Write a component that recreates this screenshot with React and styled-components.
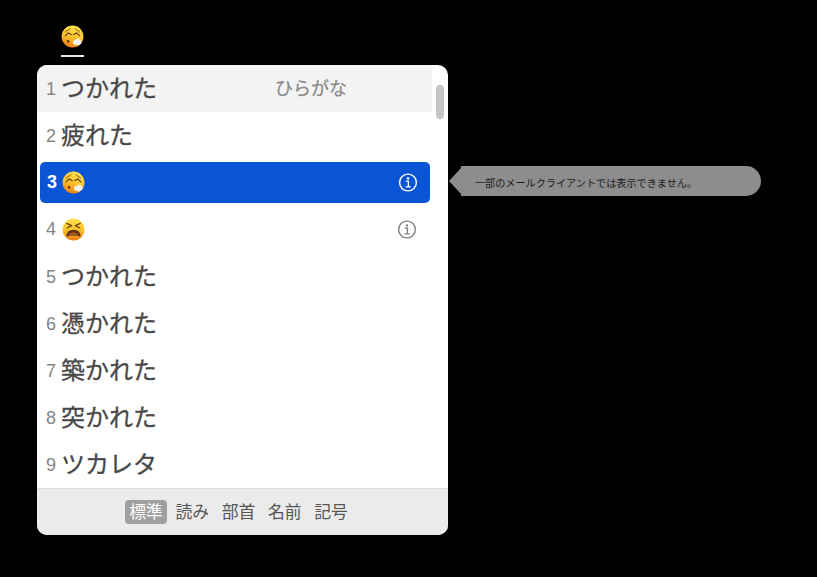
import React from "react";
import styled, { createGlobalStyle } from "styled-components";

const Global = createGlobalStyle`
  html, body { margin: 0; padding: 0; background: #000; }
  body { font-family: "Noto Sans CJK JP", "Liberation Sans", sans-serif; }
`;

const Page = styled.div`
  width: 817px;
  height: 577px;
  background: #000;
  overflow: hidden;
  padding: 25px 0 0 37px;
  box-sizing: border-box;
`;

const Composing = styled.div`
  width: 23px;
  height: 32px;
  margin-left: 24px;
  margin-bottom: 8px;
  box-sizing: border-box;
  border-bottom: 2px solid #e8e8e8;
  display: flex;
  justify-content: center;
`;

const Panel = styled.div`
  position: relative;
  width: 411px;
  height: 470px;
  background: #fff;
  border-radius: 10px;
  display: flex;
  flex-direction: column;
`;

const List = styled.div`
  flex: 1;
  width: 395px;
  display: flex;
  flex-direction: column;
`;

const Row = styled.div`
  position: relative;
  height: 47px;
  flex: none;
  display: flex;
  align-items: center;
  box-sizing: border-box;
  padding-left: 9px;
  background: ${(p) => (p.$active ? "#f3f3f3" : "transparent")};
  border-radius: ${(p) => (p.$active ? "10px 0 0 0" : "0")};
`;

const Selected = styled(Row)`
  height: 41px;
  margin: 3px 2px 3px 3px;
  padding-left: 7px;
  background: #0a55d6;
  border-radius: 5px;
`;

const Num = styled.span`
  width: ${(p) => (p.$on ? 15 : 16)}px;
  flex: none;
  padding-top: ${(p) => (p.$low ? 2 : 0)}px;
  font: ${(p) => (p.$on ? 700 : 400)} 18px "Liberation Sans", sans-serif;
  color: ${(p) => (p.$on ? "#fff" : "#858585")};
`;

const Word = styled.span`
  font-size: 24px;
  font-weight: 400;
  -webkit-text-stroke: 0.3px #484848;
  line-height: 30px;
  padding-bottom: 4px;
  margin-left: -1px;
  color: #484848;
`;

const Reading = styled.span`
  position: absolute;
  left: 238px;
  top: 9px;
  font-size: 18px;
  -webkit-text-stroke: 0.25px #8a8a8a;
  line-height: 27px;
  color: #8a8a8a;
`;

const InfoSlot = styled.span`
  position: absolute;
  right: ${(p) => p.$right}px;
  top: 50%;
  transform: translateY(calc(-50% - 0.5px));
  display: flex;
`;

const Tip = styled.div`
  position: absolute;
  left: 421px;
  top: 4px;
  width: 300px;
  height: 30px;
  background: #8d8d8d;
  border-radius: 0 15px 15px 0;
  box-sizing: border-box;
  padding-left: 14px;
  font-size: 10.15px;
  line-height: 33px;
  color: #1a1a1a;
  white-space: nowrap;
  &::before {
    content: "";
    position: absolute;
    left: -12px;
    top: 2px;
    width: 0;
    height: 0;
    border-top: 13px solid transparent;
    border-bottom: 13px solid transparent;
    border-right: 12px solid #8d8d8d;
  }
`;

const Thumb = styled.div`
  position: absolute;
  left: 399px;
  top: 20px;
  width: 8px;
  height: 34px;
  border-radius: 4px;
  background: #c4c4c4;
`;

const Footer = styled.div`
  flex: none;
  height: 47px;
  box-sizing: border-box;
  background: #ebebeb;
  border-top: 1px solid #dcdcdc;
  border-radius: 0 0 10px 10px;
  display: flex;
  justify-content: center;
  align-items: center;
  gap: 4.25px;
  padding-right: 8px;
`;

const Tab = styled.span`
  height: 24px;
  width: 42px;
  box-sizing: border-box;
  padding-bottom: 2px;
  display: flex;
  align-items: center;
  justify-content: center;
  font-size: 16.8px;
  line-height: 22px;
  border-radius: 4px;
  color: ${(p) => (p.$on ? "#fff" : "#555")};
  background: ${(p) => (p.$on ? "#a0a0a0" : "transparent")};
`;

const FaceStops = () => (
  <>
    <stop offset="0%" stopColor="#ffe04e" />
    <stop offset="50%" stopColor="#fcc42e" />
    <stop offset="100%" stopColor="#ee7c12" />
  </>
);

const Exhale = ({ id, size = 23 }) => (
  <svg width={size} height={size} viewBox="0 0 24 24">
    <defs>
      <linearGradient id={id} x1="0.65" y1="0" x2="0.3" y2="1">
        <FaceStops />
      </linearGradient>
    </defs>
    <circle cx="12" cy="12" r="11.4" fill={`url(#${id})`} />
    <path d="M4.4 7.4 9.4 3.9M19.6 7.4 14.6 3.9" stroke="#8a5a1c" strokeWidth="1" fill="none" strokeLinecap="round" />
    <path d="M4.4 11.4 7.6 8.2 10.8 10.2M13.2 10.2 16.4 8.2 19.6 11.4" stroke="#5a3410" strokeWidth="1.1" fill="none" strokeLinecap="round" strokeLinejoin="round" />
    <ellipse cx="7.4" cy="17" rx="1.2" ry="1.4" fill="#5b2c10" />
    <path d="M12.6 18.4a2 2 0 0 1 2.4-2.6a2.8 2.8 0 0 1 5-.1a2.3 2.3 0 0 1 .2 4.4a2.8 2.8 0 0 1-4.4.3a2.1 2.1 0 0 1-3.2-2z" fill="#f6f3ec" />
  </svg>
);

const Tired = ({ size = 23 }) => (
  <svg width={size} height={size} viewBox="0 0 24 24">
    <defs>
      <linearGradient id="tiredFace" x1="0.5" y1="0" x2="0.5" y2="1">
        <FaceStops />
      </linearGradient>
    </defs>
    <circle cx="12" cy="12" r="11.4" fill="url(#tiredFace)" />
    <path d="M5 5.6 10 8 5.4 10.4M19 5.6 14 8 18.6 10.4" stroke="#6a4012" strokeWidth="1.3" fill="none" strokeLinecap="round" strokeLinejoin="round" />
    <path d="M4.6 19.6Q4.8 12.2 12 12.2T19.4 19.6Q12 17 4.6 19.6z" fill="#5e3212" />
    <path d="M6.8 18.6Q12 16.6 17.2 18.6Q15.6 15.2 12 15.2T6.8 18.6z" fill="#a8602a" />
  </svg>
);

const Info = ({ color }) => (
  <svg width="20" height="20" viewBox="0 0 20 20" fill="none">
    <circle cx="10" cy="10" r="8.4" stroke={color} strokeWidth="1.4" />
    <circle cx="10" cy="5.9" r="1.2" fill={color} />
    <path d="M7.8 8.6H10.4V14.2M7.6 14.4H12.8" stroke={color} strokeWidth="1.4" />
  </svg>
);

const rest = [
  [5, "つかれた"],
  [6, "憑かれた"],
  [7, "築かれた"],
  [8, "突かれた"],
  [9, "ツカレタ"],
];
const tabs = ["標準", "読み", "部首", "名前", "記号"];

export default function App() {
  return (
    <Page>
      <Global />
      <Composing>
        <Exhale id="exhaleTop" />
      </Composing>
      <Panel>
        <Thumb />
        <List>
          <Row $active>
            <Num $low>1</Num>
            <Word>つかれた</Word>
            <Reading>ひらがな</Reading>
          </Row>
          <Row>
            <Num $low>2</Num>
            <Word>疲れた</Word>
          </Row>
          <Selected>
            <Num $on>3</Num>
            <Exhale id="exhaleRow" />
            <InfoSlot $right={12}>
              <Info color="#fff" />
            </InfoSlot>
            <Tip>一部のメールクライアントでは表示できません。</Tip>
          </Selected>
          <Row>
            <Num>4</Num>
            <Tired />
            <InfoSlot $right={15}>
              <Info color="#808080" />
            </InfoSlot>
          </Row>
          {rest.map(([n, w]) => (
            <Row key={n}>
              <Num $low>{n}</Num>
              <Word>{w}</Word>
            </Row>
          ))}
        </List>
        <Footer>
          {tabs.map((t, i) => (
            <Tab key={t} $on={i === 0}>
              {t}
            </Tab>
          ))}
        </Footer>
      </Panel>
    </Page>
  );
}
